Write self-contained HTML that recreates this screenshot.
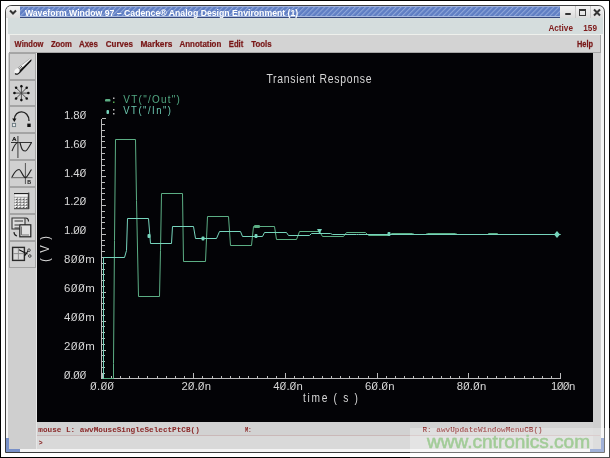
<!DOCTYPE html>
<html><head><meta charset="utf-8"><style>html,body{margin:0;padding:0;background:#fff;width:610px;height:458px;overflow:hidden}svg{display:block;will-change:transform}</style></head>
<body><svg width="610" height="458" viewBox="0 0 610 458"><rect x="0" y="0" width="610" height="458" fill="#000"/><rect x="1" y="1" width="608" height="456" fill="#fff"/><path d="M5.5,452.5 V12 Q5.5,5.5 12,5.5 H598 Q604.5,5.5 604.5,12 V452.5 Z" fill="#f4f4f4" stroke="#3c3c3c" stroke-width="1"/><defs><pattern id="st" width="3.6" height="3.6" patternUnits="userSpaceOnUse" patternTransform="rotate(45)"><rect width="3.6" height="3.6" fill="#5f7ec4"/><rect width="1.1" height="3.6" fill="#8ea6d8"/></pattern><linearGradient id="btn" x1="0" y1="0" x2="0" y2="1"><stop offset="0" stop-color="#f4f4f4"/><stop offset="1" stop-color="#dcdcdc"/></linearGradient></defs><path d="M6,18 V12 Q6,6 12,6 H20 V18 Z" fill="url(#btn)"/><rect x="20" y="6" width="540" height="12" fill="url(#st)"/><rect x="20" y="17" width="540" height="1" fill="#34467a"/><rect x="20" y="16" width="540" height="1" fill="#a8bae0"/><rect x="20" y="6" width="540" height="1" fill="#a0b2dc"/><path d="M560,6 H597 Q603,6 603,12 V18 H560 Z" fill="url(#btn)"/><rect x="575" y="6" width="1" height="12" fill="#c8c8c8"/><rect x="590" y="6" width="1" height="12" fill="#c8c8c8"/><path d="M10,10.5 L13,13.5 L16,10.5" fill="none" stroke="#333" stroke-width="2"/><rect x="565" y="13" width="6" height="2" rx="1" fill="#333"/><rect x="579.5" y="9.5" width="6" height="6" fill="none" stroke="#333" stroke-width="1"/><rect x="579" y="9" width="7" height="2" fill="#333"/><path d="M594,9.5 L600,15.5 M600,9.5 L594,15.5" stroke="#333" stroke-width="2"/><text transform="translate(24.90,16.00) scale(1.0017,1)" x="-0.00" y="0" font-family="Liberation Sans" font-weight="bold" font-size="8.70" fill="#fff"  >Waveform Window 97 – Cadence® Analog Design Environment (1)</text><rect x="8" y="18" width="595" height="16" fill="#d5dddd"/><rect x="9" y="34" width="592" height="19" fill="#d3d3d3"/><rect x="9" y="34" width="592" height="1" fill="#eef0ec"/><rect x="9" y="34" width="1" height="18" fill="#eeeeee"/><rect x="9" y="52" width="592" height="1" fill="#a6a6a6"/><rect x="600" y="35" width="1" height="18" fill="#a6a6a6"/><text transform="translate(14.60,46.80) scale(0.8118,1)" x="-0.00" y="0" font-family="Liberation Sans" font-weight="bold" font-size="9.28" fill="#781616"  stroke="#781616" stroke-width="0.25">Window</text><text transform="translate(50.90,46.80) scale(0.8324,1)" x="-0.00" y="0" font-family="Liberation Sans" font-weight="bold" font-size="9.28" fill="#781616"  stroke="#781616" stroke-width="0.25">Zoom</text><text transform="translate(78.90,46.80) scale(0.8571,1)" x="-0.00" y="0" font-family="Liberation Sans" font-weight="bold" font-size="9.28" fill="#781616"  stroke="#781616" stroke-width="0.25">Axes</text><text transform="translate(105.80,46.80) scale(0.8650,1)" x="-0.00" y="0" font-family="Liberation Sans" font-weight="bold" font-size="9.28" fill="#781616"  stroke="#781616" stroke-width="0.25">Curves</text><text transform="translate(140.40,46.80) scale(0.8968,1)" x="-0.00" y="0" font-family="Liberation Sans" font-weight="bold" font-size="9.28" fill="#781616"  stroke="#781616" stroke-width="0.25">Markers</text><text transform="translate(179.50,46.80) scale(0.8543,1)" x="-0.00" y="0" font-family="Liberation Sans" font-weight="bold" font-size="9.28" fill="#781616"  stroke="#781616" stroke-width="0.25">Annotation</text><text transform="translate(228.80,46.80) scale(0.8271,1)" x="-0.00" y="0" font-family="Liberation Sans" font-weight="bold" font-size="9.28" fill="#781616"  stroke="#781616" stroke-width="0.25">Edit</text><text transform="translate(251.20,46.80) scale(0.8450,1)" x="-0.00" y="0" font-family="Liberation Sans" font-weight="bold" font-size="9.28" fill="#781616"  stroke="#781616" stroke-width="0.25">Tools</text><text transform="translate(577.00,46.80) scale(0.7968,1)" x="-0.00" y="0" font-family="Liberation Sans" font-weight="bold" font-size="9.28" fill="#781616"  stroke="#781616" stroke-width="0.25">Help</text><text transform="translate(548.40,31.00) scale(0.9430,1)" x="-0.00" y="0" font-family="Liberation Sans" font-weight="bold" font-size="8.70" fill="#7e1a1a"  >Active</text><text transform="translate(583.30,31.00) scale(0.9434,1)" x="-0.00" y="0" font-family="Liberation Sans" font-weight="bold" font-size="8.70" fill="#7e1a1a"  >159</text><rect x="8" y="53" width="29" height="396" fill="#cfcfcf"/><rect x="36" y="53" width="1" height="396" fill="#e6e6e6"/><rect x="593" y="53" width="8" height="396" fill="#cfcfcf"/><rect x="9.5" y="53.5" width="26" height="26" fill="#d0d0d0" stroke="#a4a4a4" stroke-width="1"/><rect x="9.5" y="80.5" width="26" height="25" fill="#d0d0d0" stroke="#a4a4a4" stroke-width="1"/><rect x="9.5" y="106.5" width="26" height="26" fill="#d0d0d0" stroke="#a4a4a4" stroke-width="1"/><rect x="9.5" y="133.5" width="26" height="26" fill="#d0d0d0" stroke="#a4a4a4" stroke-width="1"/><rect x="9.5" y="160.5" width="26" height="26" fill="#d0d0d0" stroke="#a4a4a4" stroke-width="1"/><rect x="9.5" y="187.5" width="26" height="26" fill="#d0d0d0" stroke="#a4a4a4" stroke-width="1"/><rect x="9.5" y="214.5" width="26" height="26" fill="#d0d0d0" stroke="#a4a4a4" stroke-width="1"/><rect x="9.5" y="241.5" width="26" height="26" fill="#d0d0d0" stroke="#a4a4a4" stroke-width="1"/><g transform="translate(15.6,72.3) rotate(-41)"><path d="M1,-2.1 L19.5,-1 L20.6,0.2 L19.5,1.2 L1,2.6 Z" fill="#f4f4f4"/><path d="M1,1.3 L19.5,0.3 L20.6,0.4 L19.5,1.4 L1,2.7 Z" fill="#1a1a1a"/><ellipse cx="1.6" cy="0.3" rx="2.7" ry="2.5" fill="#f4f4f4"/><path d="M-1.1,0.6 A2.7,2.5 0 0 0 2.5,2.8 L19.5,1.2" fill="none" stroke="#111" stroke-width="1.2"/><path d="M5.2,-1.9 v3.8 M6.7,-1.8 v3.6 M8.2,-1.7 v3.4" stroke="#333" stroke-width="0.75"/><path d="M9,-1.6 L19.5,-1" stroke="#888" stroke-width="0.5"/></g><path d="M21.4,93.1 L29.60,93.10" stroke="#444" stroke-width="0.9"/><circle cx="28.30" cy="93.10" r="1.25" fill="#111"/><path d="M21.4,93.1 L27.62,99.32" stroke="#444" stroke-width="0.9"/><circle cx="26.70" cy="98.40" r="1.25" fill="#111"/><path d="M21.4,93.1 L21.40,101.30" stroke="#444" stroke-width="0.9"/><circle cx="21.40" cy="100.00" r="1.25" fill="#111"/><path d="M21.4,93.1 L15.18,99.32" stroke="#444" stroke-width="0.9"/><circle cx="16.10" cy="98.40" r="1.25" fill="#111"/><path d="M21.4,93.1 L13.20,93.10" stroke="#444" stroke-width="0.9"/><circle cx="14.50" cy="93.10" r="1.25" fill="#111"/><path d="M21.4,93.1 L15.18,86.88" stroke="#444" stroke-width="0.9"/><circle cx="16.10" cy="87.80" r="1.25" fill="#111"/><path d="M21.4,93.1 L21.40,84.90" stroke="#444" stroke-width="0.9"/><circle cx="21.40" cy="86.20" r="1.25" fill="#111"/><path d="M21.4,93.1 L27.62,86.88" stroke="#444" stroke-width="0.9"/><circle cx="26.70" cy="87.80" r="1.25" fill="#111"/><path d="M14.3,120 C14.3,109 29,109 29,121" fill="none" stroke="#222" stroke-width="1.3"/><path d="M12.2,118.5 L16.4,118.5 L14.3,122 Z" fill="#111"/><rect x="27.3" y="123.6" width="3.4" height="3.4" fill="#111"/><rect x="12.4" y="123.4" width="3.2" height="3.2" fill="#e8e8e8" stroke="#6a7a80" stroke-width="0.9"/><path d="M11,142.5 H32" stroke="#333" stroke-width="1"/><path d="M17.9,136 V158" stroke="#555" stroke-width="1.2"/><path d="M12,151 C14,146 16,142.5 18,142.5 M20,142.5 C22,151 23,151 25.5,151 C27,151 29,147 31.5,142.5" fill="none" stroke="#222" stroke-width="1.1"/><path d="M12.5,141 L14.3,137 L16,141 M13.2,139.6 H15.4" fill="none" stroke="#222" stroke-width="1"/><path d="M11,177.7 H32.5" stroke="#666" stroke-width="1"/><path d="M25.4,163 V184" stroke="#555" stroke-width="1"/><path d="M12,177 C15,171 17,169.5 19,169.5 C21,169.5 23,177.5 25.5,177.7 C27.5,177 29.5,172 31.5,169.5" fill="none" stroke="#222" stroke-width="1.2"/><text transform="translate(27.20,184.30) scale(0.8469,1)" x="-0.00" y="0" font-family="Liberation Sans" font-weight="bold" font-size="6.23" fill="#111"  >B</text><rect x="14" y="193" width="14.5" height="15.6" fill="#8c8c8c"/><rect x="14.3" y="193.6" width="13.4" height="3.2" fill="#f2f2f2"/><rect x="14" y="193" width="14" height="1.1" fill="#222"/><rect x="14.4" y="197.60" width="2.6" height="1.9" fill="#f6f6f6"/><rect x="16.0" y="198.90" width="1.1" height="0.8" fill="#222"/><rect x="17.8" y="197.60" width="2.6" height="1.9" fill="#f6f6f6"/><rect x="19.4" y="198.90" width="1.1" height="0.8" fill="#222"/><rect x="21.2" y="197.60" width="2.6" height="1.9" fill="#f6f6f6"/><rect x="22.8" y="198.90" width="1.1" height="0.8" fill="#222"/><rect x="24.6" y="197.60" width="2.6" height="1.9" fill="#f6f6f6"/><rect x="26.2" y="198.90" width="1.1" height="0.8" fill="#222"/><rect x="14.4" y="200.35" width="2.6" height="1.9" fill="#f6f6f6"/><rect x="16.0" y="201.65" width="1.1" height="0.8" fill="#222"/><rect x="17.8" y="200.35" width="2.6" height="1.9" fill="#f6f6f6"/><rect x="19.4" y="201.65" width="1.1" height="0.8" fill="#222"/><rect x="21.2" y="200.35" width="2.6" height="1.9" fill="#f6f6f6"/><rect x="22.8" y="201.65" width="1.1" height="0.8" fill="#222"/><rect x="24.6" y="200.35" width="2.6" height="1.9" fill="#f6f6f6"/><rect x="26.2" y="201.65" width="1.1" height="0.8" fill="#222"/><rect x="14.4" y="203.10" width="2.6" height="1.9" fill="#f6f6f6"/><rect x="16.0" y="204.40" width="1.1" height="0.8" fill="#222"/><rect x="17.8" y="203.10" width="2.6" height="1.9" fill="#f6f6f6"/><rect x="19.4" y="204.40" width="1.1" height="0.8" fill="#222"/><rect x="21.2" y="203.10" width="2.6" height="1.9" fill="#f6f6f6"/><rect x="22.8" y="204.40" width="1.1" height="0.8" fill="#222"/><rect x="24.6" y="203.10" width="2.6" height="1.9" fill="#f6f6f6"/><rect x="26.2" y="204.40" width="1.1" height="0.8" fill="#222"/><rect x="14.4" y="205.85" width="2.6" height="1.9" fill="#f6f6f6"/><rect x="16.0" y="207.15" width="1.1" height="0.8" fill="#222"/><rect x="17.8" y="205.85" width="2.6" height="1.9" fill="#f6f6f6"/><rect x="19.4" y="207.15" width="1.1" height="0.8" fill="#222"/><rect x="21.2" y="205.85" width="2.6" height="1.9" fill="#f6f6f6"/><rect x="22.8" y="207.15" width="1.1" height="0.8" fill="#222"/><rect x="24.6" y="205.85" width="2.6" height="1.9" fill="#f6f6f6"/><rect x="26.2" y="207.15" width="1.1" height="0.8" fill="#222"/><rect x="28.2" y="192.6" width="1.1" height="16.4" fill="#222"/><rect x="14" y="208.2" width="15" height="1" fill="#444"/><path d="M12,218 H25 V229 H12 Z" fill="#dcdcdc" stroke="#333" stroke-width="1.1"/><path d="M14.5,221 H23 M14.5,225 H19 M14.5,228 H19" stroke="#333" stroke-width="1"/><rect x="19.8" y="224.8" width="11" height="12" fill="#e0e0e0" stroke="#222" stroke-width="1.2"/><path d="M21.5,226.5 V235 H29" fill="none" stroke="#777" stroke-width="1"/><path d="M25.5,218 C27.5,218 28.5,219.5 28.5,221.5" fill="none" stroke="#222" stroke-width="1.1"/><path d="M14,232 C14,234 15,235.5 17,236" fill="none" stroke="#222" stroke-width="1.1"/><rect x="12.6" y="247.4" width="11.8" height="13" fill="#d8d8d8" stroke="#2a2a2a" stroke-width="1.4"/><path d="M18.4,248 V260 M13.3,253.6 H24" stroke="#888" stroke-width="0.9"/><path d="M19,249.7 L27.5,254 M24.5,256 L28,251" stroke="#111" stroke-width="1.1"/><circle cx="29" cy="250.2" r="1.3" fill="none" stroke="#333" stroke-width="0.9"/><circle cx="29.8" cy="256" r="1.3" fill="none" stroke="#333" stroke-width="0.9"/><rect x="37" y="53" width="556" height="369" fill="#030306"/><rect x="37" y="422" width="556" height="27" fill="#d2d2d2"/><rect x="37" y="436" width="556" height="13" fill="#d9d9d9"/><rect x="37" y="435" width="563" height="1" fill="#cab8b8"/><path d="M7.5,438 V450.5 H20" fill="none" stroke="#7890c8" stroke-width="3"/><path d="M590,450.5 H602.5 V438" fill="none" stroke="#7890c8" stroke-width="3"/><text transform="translate(64.00,118.80) scale(1.0000,1)" x="-0.00" y="0" font-family="Liberation Sans" font-weight="normal" font-size="11.45" fill="#d8d8d8" letter-spacing="-0.090" >1.80</text><path d="M79.95,118.50 L85.70,111.09 " stroke="#d8d8d8" stroke-width="0.9" fill="none"/><text transform="translate(64.00,147.69) scale(1.0000,1)" x="-0.00" y="0" font-family="Liberation Sans" font-weight="normal" font-size="11.45" fill="#d8d8d8" letter-spacing="-0.090" >1.60</text><path d="M79.95,147.39 L85.70,139.97 " stroke="#d8d8d8" stroke-width="0.9" fill="none"/><text transform="translate(64.00,176.58) scale(1.0000,1)" x="-0.00" y="0" font-family="Liberation Sans" font-weight="normal" font-size="11.45" fill="#d8d8d8" letter-spacing="-0.090" >1.40</text><path d="M79.95,176.28 L85.70,168.86 " stroke="#d8d8d8" stroke-width="0.9" fill="none"/><text transform="translate(64.00,205.47) scale(1.0000,1)" x="-0.00" y="0" font-family="Liberation Sans" font-weight="normal" font-size="11.45" fill="#d8d8d8" letter-spacing="-0.090" >1.20</text><path d="M79.95,205.17 L85.70,197.75 " stroke="#d8d8d8" stroke-width="0.9" fill="none"/><text transform="translate(64.00,234.36) scale(1.0000,1)" x="-0.00" y="0" font-family="Liberation Sans" font-weight="normal" font-size="11.45" fill="#d8d8d8" letter-spacing="-0.090" >1.00</text><path d="M73.67,234.06 L79.42,226.64 M79.95,234.06 L85.70,226.64 " stroke="#d8d8d8" stroke-width="0.9" fill="none"/><text transform="translate(64.00,263.24) scale(1.0000,1)" x="-0.00" y="0" font-family="Liberation Sans" font-weight="normal" font-size="11.45" fill="#d8d8d8" letter-spacing="0.726" >800m</text><path d="M71.39,262.94 L77.15,255.53 M78.49,262.94 L84.24,255.53 " stroke="#d8d8d8" stroke-width="0.9" fill="none"/><text transform="translate(64.00,292.13) scale(1.0000,1)" x="-0.00" y="0" font-family="Liberation Sans" font-weight="normal" font-size="11.45" fill="#d8d8d8" letter-spacing="0.726" >600m</text><path d="M71.39,291.83 L77.15,284.42 M78.49,291.83 L84.24,284.42 " stroke="#d8d8d8" stroke-width="0.9" fill="none"/><text transform="translate(64.00,321.02) scale(1.0000,1)" x="-0.00" y="0" font-family="Liberation Sans" font-weight="normal" font-size="11.45" fill="#d8d8d8" letter-spacing="0.726" >400m</text><path d="M71.39,320.72 L77.15,313.31 M78.49,320.72 L84.24,313.31 " stroke="#d8d8d8" stroke-width="0.9" fill="none"/><text transform="translate(64.00,349.91) scale(1.0000,1)" x="-0.00" y="0" font-family="Liberation Sans" font-weight="normal" font-size="11.45" fill="#d8d8d8" letter-spacing="0.726" >200m</text><path d="M71.39,349.61 L77.15,342.20 M78.49,349.61 L84.24,342.20 " stroke="#d8d8d8" stroke-width="0.9" fill="none"/><text transform="translate(64.00,378.80) scale(1.0000,1)" x="-0.00" y="0" font-family="Liberation Sans" font-weight="normal" font-size="11.45" fill="#d8d8d8" letter-spacing="-0.090" >0.00</text><path d="M64.30,378.50 L70.05,371.09 M73.67,378.50 L79.42,371.09 M79.95,378.50 L85.70,371.09 " stroke="#d8d8d8" stroke-width="0.9" fill="none"/><text transform="translate(90.20,389.80) scale(1.0000,1)" x="-0.00" y="0" font-family="Liberation Sans" font-weight="normal" font-size="11.30" fill="#d8d8d8" letter-spacing="0.538" >0.00</text><path d="M90.50,389.50 L96.17,382.19 M101.00,389.50 L106.68,382.19 M107.83,389.50 L113.50,382.19 " stroke="#d8d8d8" stroke-width="0.9" fill="none"/><text transform="translate(181.49,389.80) scale(1.0000,1)" x="-0.00" y="0" font-family="Liberation Sans" font-weight="normal" font-size="11.30" fill="#d8d8d8" letter-spacing="0.296" >20.0n</text><path d="M188.37,389.50 L194.05,382.19 M198.39,389.50 L204.07,382.19 " stroke="#d8d8d8" stroke-width="0.9" fill="none"/><text transform="translate(273.23,389.80) scale(1.0000,1)" x="-0.00" y="0" font-family="Liberation Sans" font-weight="normal" font-size="11.30" fill="#d8d8d8" letter-spacing="0.296" >40.0n</text><path d="M280.11,389.50 L285.79,382.19 M290.13,389.50 L295.81,382.19 " stroke="#d8d8d8" stroke-width="0.9" fill="none"/><text transform="translate(364.97,389.80) scale(1.0000,1)" x="-0.00" y="0" font-family="Liberation Sans" font-weight="normal" font-size="11.30" fill="#d8d8d8" letter-spacing="0.296" >60.0n</text><path d="M371.85,389.50 L377.53,382.19 M381.87,389.50 L387.55,382.19 " stroke="#d8d8d8" stroke-width="0.9" fill="none"/><text transform="translate(456.71,389.80) scale(1.0000,1)" x="-0.00" y="0" font-family="Liberation Sans" font-weight="normal" font-size="11.30" fill="#d8d8d8" letter-spacing="0.296" >80.0n</text><path d="M463.59,389.50 L469.27,382.19 M473.61,389.50 L479.29,382.19 " stroke="#d8d8d8" stroke-width="0.9" fill="none"/><text transform="translate(551.00,389.80) scale(1.0000,1)" x="-0.00" y="0" font-family="Liberation Sans" font-weight="normal" font-size="11.30" fill="#d8d8d8" letter-spacing="-0.251" >100n</text><path d="M557.34,389.50 L563.01,382.19 M563.37,389.50 L569.05,382.19 " stroke="#d8d8d8" stroke-width="0.9" fill="none"/><text transform="translate(266.40,83.30) scale(0.8600,1)" x="-0.00" y="0" font-family="Liberation Sans" font-weight="normal" font-size="12.17" fill="#d8d8d8" letter-spacing="0.815" >Transient Response</text><text transform="translate(303.00,401.50) scale(0.8600,1)" x="-0.00" y="0" font-family="Liberation Sans" font-weight="normal" font-size="11.85" fill="#d8d8d8" letter-spacing="1.986" >time ( s )</text><g transform="translate(44.2,249) rotate(-90)"><text transform="translate(-13.00,4.50) scale(0.8600,1)" x="-0.00" y="0" font-family="Liberation Sans" font-weight="normal" font-size="13.04" fill="#d8d8d8" letter-spacing="1.395" >( V )</text></g><text transform="translate(123.30,102.80) scale(0.8600,1)" x="-0.00" y="0" font-family="Liberation Sans" font-weight="normal" font-size="11.59" fill="#52a882" letter-spacing="1.471" >VT("/Out")</text><text transform="translate(123.30,113.90) scale(0.8600,1)" x="-0.00" y="0" font-family="Liberation Sans" font-weight="normal" font-size="11.01" fill="#6cc8b0" letter-spacing="1.749" >VT("/In")</text><text transform="translate(38.30,432.20) scale(1.0388,1)" x="-0.00" y="0" font-family="Liberation Mono" font-weight="bold" font-size="7.42" fill="#8a2828"  >mouse L: awvMouseSingleSelectPtCB()</text><text transform="translate(245.00,432.20) scale(0.7296,1)" x="-0.00" y="0" font-family="Liberation Mono" font-weight="bold" font-size="7.42" fill="#8a2828"  >M:</text><text transform="translate(422.40,432.20) scale(1.0404,1)" x="-0.00" y="0" font-family="Liberation Mono" font-weight="bold" font-size="7.42" fill="#8a2828"  >R: awvUpdateWindowMenuCB()</text><text transform="translate(38.70,444.50) scale(1.0000,1)" x="-0.00" y="0" font-family="Liberation Mono" font-weight="bold" font-size="6.50" fill="#8a2828"  >&gt;</text><path d="M101.5,118.5 V378.5 H561" fill="none" stroke="#bcbcbc" stroke-width="1" shape-rendering="crispEdges"/><path d="M102,118.5 h4" stroke="#bcbcbc" stroke-width="1" shape-rendering="crispEdges"/><path d="M102,124.5 h2.5" stroke="#bcbcbc" stroke-width="1" shape-rendering="crispEdges"/><path d="M102,130.5 h2.5" stroke="#bcbcbc" stroke-width="1" shape-rendering="crispEdges"/><path d="M102,136.5 h2.5" stroke="#bcbcbc" stroke-width="1" shape-rendering="crispEdges"/><path d="M102,141.5 h2.5" stroke="#bcbcbc" stroke-width="1" shape-rendering="crispEdges"/><path d="M102,147.5 h4" stroke="#bcbcbc" stroke-width="1" shape-rendering="crispEdges"/><path d="M102,153.5 h2.5" stroke="#bcbcbc" stroke-width="1" shape-rendering="crispEdges"/><path d="M102,159.5 h2.5" stroke="#bcbcbc" stroke-width="1" shape-rendering="crispEdges"/><path d="M102,165.5 h2.5" stroke="#bcbcbc" stroke-width="1" shape-rendering="crispEdges"/><path d="M102,170.5 h2.5" stroke="#bcbcbc" stroke-width="1" shape-rendering="crispEdges"/><path d="M102,176.5 h4" stroke="#bcbcbc" stroke-width="1" shape-rendering="crispEdges"/><path d="M102,182.5 h2.5" stroke="#bcbcbc" stroke-width="1" shape-rendering="crispEdges"/><path d="M102,188.5 h2.5" stroke="#bcbcbc" stroke-width="1" shape-rendering="crispEdges"/><path d="M102,193.5 h2.5" stroke="#bcbcbc" stroke-width="1" shape-rendering="crispEdges"/><path d="M102,199.5 h2.5" stroke="#bcbcbc" stroke-width="1" shape-rendering="crispEdges"/><path d="M102,205.5 h4" stroke="#bcbcbc" stroke-width="1" shape-rendering="crispEdges"/><path d="M102,211.5 h2.5" stroke="#bcbcbc" stroke-width="1" shape-rendering="crispEdges"/><path d="M102,217.5 h2.5" stroke="#bcbcbc" stroke-width="1" shape-rendering="crispEdges"/><path d="M102,222.5 h2.5" stroke="#bcbcbc" stroke-width="1" shape-rendering="crispEdges"/><path d="M102,228.5 h2.5" stroke="#bcbcbc" stroke-width="1" shape-rendering="crispEdges"/><path d="M102,234.5 h4" stroke="#bcbcbc" stroke-width="1" shape-rendering="crispEdges"/><path d="M102,240.5 h2.5" stroke="#bcbcbc" stroke-width="1" shape-rendering="crispEdges"/><path d="M102,245.5 h2.5" stroke="#bcbcbc" stroke-width="1" shape-rendering="crispEdges"/><path d="M102,251.5 h2.5" stroke="#bcbcbc" stroke-width="1" shape-rendering="crispEdges"/><path d="M102,257.5 h2.5" stroke="#bcbcbc" stroke-width="1" shape-rendering="crispEdges"/><path d="M102,263.5 h4" stroke="#bcbcbc" stroke-width="1" shape-rendering="crispEdges"/><path d="M102,269.5 h2.5" stroke="#bcbcbc" stroke-width="1" shape-rendering="crispEdges"/><path d="M102,274.5 h2.5" stroke="#bcbcbc" stroke-width="1" shape-rendering="crispEdges"/><path d="M102,280.5 h2.5" stroke="#bcbcbc" stroke-width="1" shape-rendering="crispEdges"/><path d="M102,286.5 h2.5" stroke="#bcbcbc" stroke-width="1" shape-rendering="crispEdges"/><path d="M102,292.5 h4" stroke="#bcbcbc" stroke-width="1" shape-rendering="crispEdges"/><path d="M102,297.5 h2.5" stroke="#bcbcbc" stroke-width="1" shape-rendering="crispEdges"/><path d="M102,303.5 h2.5" stroke="#bcbcbc" stroke-width="1" shape-rendering="crispEdges"/><path d="M102,309.5 h2.5" stroke="#bcbcbc" stroke-width="1" shape-rendering="crispEdges"/><path d="M102,315.5 h2.5" stroke="#bcbcbc" stroke-width="1" shape-rendering="crispEdges"/><path d="M102,321.5 h4" stroke="#bcbcbc" stroke-width="1" shape-rendering="crispEdges"/><path d="M102,326.5 h2.5" stroke="#bcbcbc" stroke-width="1" shape-rendering="crispEdges"/><path d="M102,332.5 h2.5" stroke="#bcbcbc" stroke-width="1" shape-rendering="crispEdges"/><path d="M102,338.5 h2.5" stroke="#bcbcbc" stroke-width="1" shape-rendering="crispEdges"/><path d="M102,344.5 h2.5" stroke="#bcbcbc" stroke-width="1" shape-rendering="crispEdges"/><path d="M102,350.5 h4" stroke="#bcbcbc" stroke-width="1" shape-rendering="crispEdges"/><path d="M102,355.5 h2.5" stroke="#bcbcbc" stroke-width="1" shape-rendering="crispEdges"/><path d="M102,361.5 h2.5" stroke="#bcbcbc" stroke-width="1" shape-rendering="crispEdges"/><path d="M102,367.5 h2.5" stroke="#bcbcbc" stroke-width="1" shape-rendering="crispEdges"/><path d="M102,373.5 h2.5" stroke="#bcbcbc" stroke-width="1" shape-rendering="crispEdges"/><path d="M102,378.5 h4" stroke="#bcbcbc" stroke-width="1" shape-rendering="crispEdges"/><path d="M102.5,378 v-5" stroke="#bcbcbc" stroke-width="1" shape-rendering="crispEdges"/><path d="M111.5,378 v-2" stroke="#bcbcbc" stroke-width="1" shape-rendering="crispEdges"/><path d="M120.5,378 v-2" stroke="#bcbcbc" stroke-width="1" shape-rendering="crispEdges"/><path d="M129.5,378 v-2" stroke="#bcbcbc" stroke-width="1" shape-rendering="crispEdges"/><path d="M138.5,378 v-2" stroke="#bcbcbc" stroke-width="1" shape-rendering="crispEdges"/><path d="M147.5,378 v-2" stroke="#bcbcbc" stroke-width="1" shape-rendering="crispEdges"/><path d="M157.5,378 v-2" stroke="#bcbcbc" stroke-width="1" shape-rendering="crispEdges"/><path d="M166.5,378 v-2" stroke="#bcbcbc" stroke-width="1" shape-rendering="crispEdges"/><path d="M175.5,378 v-2" stroke="#bcbcbc" stroke-width="1" shape-rendering="crispEdges"/><path d="M184.5,378 v-2" stroke="#bcbcbc" stroke-width="1" shape-rendering="crispEdges"/><path d="M193.5,378 v-5" stroke="#bcbcbc" stroke-width="1" shape-rendering="crispEdges"/><path d="M202.5,378 v-2" stroke="#bcbcbc" stroke-width="1" shape-rendering="crispEdges"/><path d="M212.5,378 v-2" stroke="#bcbcbc" stroke-width="1" shape-rendering="crispEdges"/><path d="M221.5,378 v-2" stroke="#bcbcbc" stroke-width="1" shape-rendering="crispEdges"/><path d="M230.5,378 v-2" stroke="#bcbcbc" stroke-width="1" shape-rendering="crispEdges"/><path d="M239.5,378 v-2" stroke="#bcbcbc" stroke-width="1" shape-rendering="crispEdges"/><path d="M248.5,378 v-2" stroke="#bcbcbc" stroke-width="1" shape-rendering="crispEdges"/><path d="M257.5,378 v-2" stroke="#bcbcbc" stroke-width="1" shape-rendering="crispEdges"/><path d="M267.5,378 v-2" stroke="#bcbcbc" stroke-width="1" shape-rendering="crispEdges"/><path d="M276.5,378 v-2" stroke="#bcbcbc" stroke-width="1" shape-rendering="crispEdges"/><path d="M285.5,378 v-5" stroke="#bcbcbc" stroke-width="1" shape-rendering="crispEdges"/><path d="M294.5,378 v-2" stroke="#bcbcbc" stroke-width="1" shape-rendering="crispEdges"/><path d="M303.5,378 v-2" stroke="#bcbcbc" stroke-width="1" shape-rendering="crispEdges"/><path d="M313.5,378 v-2" stroke="#bcbcbc" stroke-width="1" shape-rendering="crispEdges"/><path d="M322.5,378 v-2" stroke="#bcbcbc" stroke-width="1" shape-rendering="crispEdges"/><path d="M331.5,378 v-2" stroke="#bcbcbc" stroke-width="1" shape-rendering="crispEdges"/><path d="M340.5,378 v-2" stroke="#bcbcbc" stroke-width="1" shape-rendering="crispEdges"/><path d="M349.5,378 v-2" stroke="#bcbcbc" stroke-width="1" shape-rendering="crispEdges"/><path d="M358.5,378 v-2" stroke="#bcbcbc" stroke-width="1" shape-rendering="crispEdges"/><path d="M368.5,378 v-2" stroke="#bcbcbc" stroke-width="1" shape-rendering="crispEdges"/><path d="M377.5,378 v-5" stroke="#bcbcbc" stroke-width="1" shape-rendering="crispEdges"/><path d="M386.5,378 v-2" stroke="#bcbcbc" stroke-width="1" shape-rendering="crispEdges"/><path d="M395.5,378 v-2" stroke="#bcbcbc" stroke-width="1" shape-rendering="crispEdges"/><path d="M404.5,378 v-2" stroke="#bcbcbc" stroke-width="1" shape-rendering="crispEdges"/><path d="M413.5,378 v-2" stroke="#bcbcbc" stroke-width="1" shape-rendering="crispEdges"/><path d="M423.5,378 v-2" stroke="#bcbcbc" stroke-width="1" shape-rendering="crispEdges"/><path d="M432.5,378 v-2" stroke="#bcbcbc" stroke-width="1" shape-rendering="crispEdges"/><path d="M441.5,378 v-2" stroke="#bcbcbc" stroke-width="1" shape-rendering="crispEdges"/><path d="M450.5,378 v-2" stroke="#bcbcbc" stroke-width="1" shape-rendering="crispEdges"/><path d="M459.5,378 v-2" stroke="#bcbcbc" stroke-width="1" shape-rendering="crispEdges"/><path d="M468.5,378 v-5" stroke="#bcbcbc" stroke-width="1" shape-rendering="crispEdges"/><path d="M478.5,378 v-2" stroke="#bcbcbc" stroke-width="1" shape-rendering="crispEdges"/><path d="M487.5,378 v-2" stroke="#bcbcbc" stroke-width="1" shape-rendering="crispEdges"/><path d="M496.5,378 v-2" stroke="#bcbcbc" stroke-width="1" shape-rendering="crispEdges"/><path d="M505.5,378 v-2" stroke="#bcbcbc" stroke-width="1" shape-rendering="crispEdges"/><path d="M514.5,378 v-2" stroke="#bcbcbc" stroke-width="1" shape-rendering="crispEdges"/><path d="M524.5,378 v-2" stroke="#bcbcbc" stroke-width="1" shape-rendering="crispEdges"/><path d="M533.5,378 v-2" stroke="#bcbcbc" stroke-width="1" shape-rendering="crispEdges"/><path d="M542.5,378 v-2" stroke="#bcbcbc" stroke-width="1" shape-rendering="crispEdges"/><path d="M551.5,378 v-2" stroke="#bcbcbc" stroke-width="1" shape-rendering="crispEdges"/><path d="M560.5,378 v-5" stroke="#bcbcbc" stroke-width="1" shape-rendering="crispEdges"/><rect x="105" y="99" width="5.5" height="2.6" rx="1.2" fill="#5cae84"/><rect x="106.5" y="110" width="2.5" height="4" rx="1" fill="#76d4bc"/><rect x="113" y="97.5" width="1.5" height="1.5" fill="#bbb"/><rect x="113" y="101.5" width="1.5" height="1.5" fill="#5a5"/><rect x="113" y="109" width="1.5" height="1.5" fill="#bbb"/><rect x="113" y="113" width="1.5" height="1.5" fill="#bbb"/><path d="M102.5,378.5 L113.5,378.5 L113.5,363.5 L114.5,240.5 L115.5,139.5 L135.5,139.5 L136.5,200.5 L138.5,296.5 L159.5,296.5 L160.5,250.5 L161.5,193.5 L182.5,193.5 L183.5,261.5 L205.5,261.5 L207.5,216.5 L228.5,216.5 L230.5,245.5 L251.5,245.5 L253.5,226.5 L274.5,226.5 L276.5,239.5 L296.5,239.5 L299.5,231.5 L319.5,231.5 L322.5,236.5 L343.5,236.5 L346.5,232.5 L365.5,232.5 L368.5,235.5 L389.5,235.5 L391.5,233.5 L412.5,233.5 L414.5,234.5 L425.5,234.5 L427.5,233.5 L455.5,233.5 L457.5,234.5 L487.5,234.5 L488.5,233.5 L497.5,233.5 L498.5,234.5 L560.5,234.5" fill="none" stroke="#5cae84" stroke-width="1"/><path d="M102.5,378.5 L103.5,378.5 L103.5,257.5 L124.5,257.5 L126.5,250.5 L127.5,218.5 L148.5,218.5 L150.5,243.5 L171.5,243.5 L172.5,226.5 L193.5,226.5 L195.5,238.5 L216.5,238.5 L219.5,231.5 L240.5,231.5 L242.5,236.5 L262.5,236.5 L264.5,232.5 L286.5,232.5 L288.5,235.5 L309.5,235.5 L311.5,233.5 L330.5,233.5 L332.5,234.5 L356.5,234.5 L358.5,234.5 L560.5,234.5" fill="none" stroke="#76d4bc" stroke-width="1"/><rect x="147.5" y="234" width="3" height="4" rx="1" fill="#76d4bc"/><rect x="201.5" y="236.5" width="3" height="4" rx="1" fill="#76d4bc"/><rect x="254.5" y="234" width="3" height="4" rx="1" fill="#76d4bc"/><rect x="387.5" y="232" width="3" height="4" rx="1" fill="#76d4bc"/><path d="M557,231 L560,234.5 L557,238 L554,234.5 Z" fill="#76d4bc"/><path d="M317,229 h5 l-2.5,5 z" fill="#76d4bc"/><rect x="254" y="225.0" width="6" height="3" rx="1" fill="#5cae84"/><rect x="410" y="428" width="200" height="30" fill="#fff" fill-opacity="0.3"/><text transform="translate(426.80,448.30) scale(1.0111,1)" x="0.09" y="0" font-family="Liberation Sans" font-weight="normal" font-size="18.87" fill="#a2cc98"  stroke="#a2cc98" stroke-width="0.55">www.cntronics.com</text></svg></body></html>
